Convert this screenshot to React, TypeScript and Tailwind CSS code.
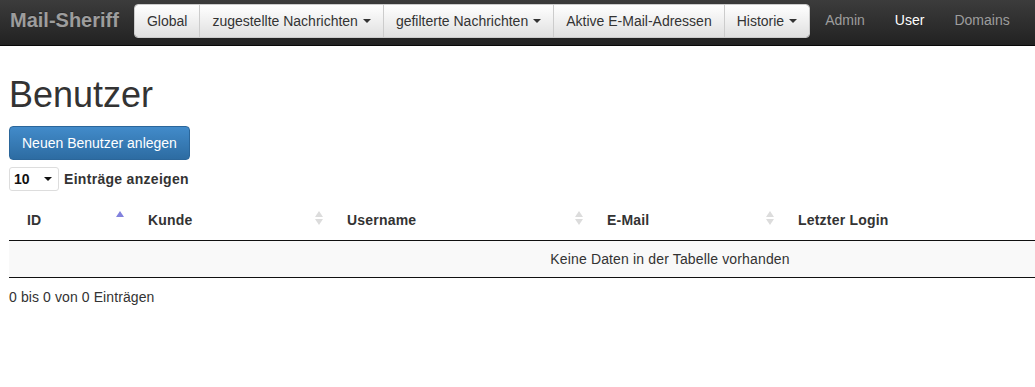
import React from 'react'

const font = { fontFamily: '"Liberation Sans", Arial, sans-serif' }

function Caret({ className = '' }: { className?: string }) {
  return <span className={`inline-block ml-[4px] align-middle w-0 h-0 border-t-[4px] border-x-[4px] border-x-transparent border-t-current ${className}`} />
}

function SortAsc() {
  return (
    <svg width="8" height="16" viewBox="0 0 8 16" className="absolute right-[6px] top-[10px]">
      <polygon points="0,7 4,1 8,7" fill="#8181dd" />
    </svg>
  )
}

function SortBoth() {
  return (
    <svg width="8" height="16" viewBox="0 0 8 16" className="absolute right-[6px] top-[10px]">
      <polygon points="0,7 4,1 8,7" fill="#dcdcdc" />
      <polygon points="0,9 4,15 8,9" fill="#dcdcdc" />
    </svg>
  )
}

export default function App() {
  const navButtons = [
    { label: 'Global', caret: false },
    { label: 'zugestellte Nachrichten', caret: true },
    { label: 'gefilterte Nachrichten', caret: true },
    { label: 'Aktive E-Mail-Adressen', caret: false },
    { label: 'Historie', caret: true },
  ]

  const columns = [
    { label: 'ID', width: 'w-[121px]', sort: 'asc' },
    { label: 'Kunde', width: 'w-[199px]', sort: 'both' },
    { label: 'Username', width: 'w-[260px]', sort: 'both' },
    { label: 'E-Mail', width: 'w-[191px]', sort: 'both' },
    { label: 'Letzter Login', width: 'w-[551px]', sort: 'none' },
  ]

  return (
    <div className="w-[1035px] h-[387px] overflow-hidden bg-white text-[14px] text-[#333]" style={font}>
      {/* Navbar */}
      <div className="h-[46px] flex items-start bg-gradient-to-b from-[#3c3c3c] to-[#222] border-b border-[#080808]">
        <div className="pl-[10px] pr-[15px] pt-[10px] text-[20px] font-bold leading-[20px] text-[#9d9d9d] [text-shadow:0_-1px_0_rgba(0,0,0,0.25)]">
          Mail-Sheriff
        </div>
        <div className="mt-[4px] flex rounded-[4px] border border-[#ccc] overflow-hidden shadow-[0_1px_1px_rgba(0,0,0,0.08)]">
          {navButtons.map((b, i) => (
            <div
              key={b.label}
              className={`h-[32px] px-[12px] flex items-center bg-gradient-to-b from-white to-[#e0e0e0] text-[#333] leading-[20px] ${i > 0 ? 'border-l border-[#ccc]' : ''}`}
            >
              {b.label}
              {b.caret && <Caret className="ml-[5px]" />}
            </div>
          ))}
        </div>
        <div className="flex pt-[10px] leading-[20px]">
          <span className="px-[15px] text-[#9d9d9d]">Admin</span>
          <span className="px-[15px] text-white">User</span>
          <span className="px-[15px] text-[#9d9d9d]">Domains</span>
        </div>
      </div>

      {/* Content */}
      <div className="pl-[9px]">
        <h1 className="mt-[29px] text-[36px] leading-[40px] font-normal text-[#333]">Benutzer</h1>
        <button className="mt-[11px] h-[34px] px-[12px] rounded-[4px] border border-[#2b669a] bg-gradient-to-b from-[#428bca] to-[#2d6ca2] text-white text-[14px] leading-[20px]">
          Neuen Benutzer anlegen
        </button>
        <div className="mt-[7px] flex items-center">
          <div className="w-[50px] h-[24px] border border-[#ddd] rounded-[3px] flex items-center justify-between pl-[4px] pr-[6px] font-bold text-[14px] text-[#111]">
            <span>10</span>
            <Caret className="text-[#111]" />
          </div>
          <span className="ml-[5px] font-bold tracking-[0.3px]">Einträge anzeigen</span>
        </div>

        <table className="mt-[9px] w-[1322px] border-collapse table-fixed">
          <thead>
            <tr>
              {columns.map(c => (
                <th
                  key={c.label}
                  className={`${c.width} relative text-left font-bold tracking-[0.2px] px-[18px] py-[10px] leading-[20px] border-b border-[#111]`}
                >
                  {c.label}
                  {c.sort === 'asc' && <SortAsc />}
                  {c.sort === 'both' && <SortBoth />}
                </th>
              ))}
            </tr>
          </thead>
          <tbody>
            <tr className="bg-[#f9f9f9]">
              <td colSpan={5} className="text-center py-[8px] px-[10px] leading-[20px] tracking-[0.15px] border-b border-[#111]">
                Keine Daten in der Tabelle vorhanden
              </td>
            </tr>
          </tbody>
        </table>
        <div className="pt-[9px] leading-[20px] tracking-[0.1px]">0 bis 0 von 0 Einträgen</div>
      </div>
    </div>
  )
}
